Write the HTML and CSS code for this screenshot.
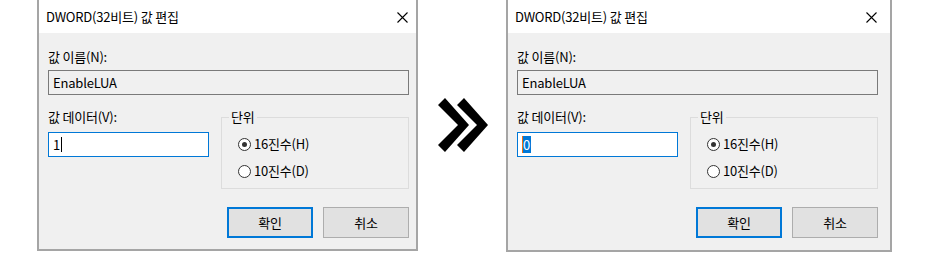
FILE: index.html
```html
<!DOCTYPE html>
<html>
<head>
  <title>DWORD 값 편집</title>
  <link rel="stylesheet" href="styles.css">
</head>
<body>
  <div class="page">
    <div class="dialog">
      <div class="titlebar">
        <span class="title">DWORD(32비트) 값 편집</span>
        <svg class="close" width="11" height="11" viewBox="0 0 11 11"><path d="M0.5 0.5 L10.5 10.5 M10.5 0.5 L0.5 10.5" stroke="#000" stroke-width="1.1"/></svg>
      </div>
      <div class="dlg-body">
        <div class="label">값 이름(N):</div>
        <div class="name-field">EnableLUA</div>
        <div class="row">
          <div class="data-col">
            <div class="label">값 데이터(V):</div>
            <div class="data-field">1<span class="caret"></span></div>
          </div>
          <fieldset class="group">
            <legend>단위</legend>
            <div class="radio"><span class="dot checked"></span>16진수(H)</div>
            <div class="radio"><span class="dot"></span>10진수(D)</div>
          </fieldset>
        </div>
        <div class="buttons">
          <div class="btn default">확인</div>
          <div class="btn">취소</div>
        </div>
      </div>
    </div>

    <div class="arrow">
      <svg width="88" height="255" viewBox="0 0 88 255">
        <polygon points="20,105 27,98 51,125 27,152 20,145 40,125" fill="#000"/>
        <polygon points="39,105 46,98 70,125 46,152 39,145 59,125" fill="#000"/>
      </svg>
    </div>

    <div class="dialog wide">
      <div class="titlebar">
        <span class="title">DWORD(32비트) 값 편집</span>
        <svg class="close" width="11" height="11" viewBox="0 0 11 11"><path d="M0.5 0.5 L10.5 10.5 M10.5 0.5 L0.5 10.5" stroke="#000" stroke-width="1.1"/></svg>
      </div>
      <div class="dlg-body">
        <div class="label">값 이름(N):</div>
        <div class="name-field">EnableLUA</div>
        <div class="row">
          <div class="data-col">
            <div class="label">값 데이터(V):</div>
            <div class="data-field"><span class="ime"></span><span class="selected">0</span></div>
          </div>
          <fieldset class="group">
            <legend>단위</legend>
            <div class="radio"><span class="dot checked"></span>16진수(H)</div>
            <div class="radio"><span class="dot"></span>10진수(D)</div>
          </fieldset>
        </div>
        <div class="buttons">
          <div class="btn default">확인</div>
          <div class="btn">취소</div>
        </div>
      </div>
    </div>
  </div>
</body>
</html>
```

FILE: styles.css
```css
/* two registry edit dialogs, before and after */
body {
  margin: 0;
  padding: 0;
  background-color: #fff;
  font-family: "Noto Sans CJK KR", sans-serif;
  font-size: 13px;
  letter-spacing: -0.2px;
  color: #000;
}

.page {
  display: flex;
  padding-left: 37px;
}

.dialog {
  width: 377px;
  height: 249px;
  border: 2px solid #a5a5a5;
  border-top: none;
  display: flex;
  flex-direction: column;
  background-color: #f0f0f0;
}

.dialog.wide {
  width: 382px;
  height: 250px;
}

.titlebar {
  height: 33px;
  background-color: #fff;
  display: flex;
  align-items: center;
  justify-content: space-between;
  padding: 0 8px 0 7px;
  flex-shrink: 0;
}

.dialog.wide .titlebar {
  padding-right: 13px;
}

.title {
  line-height: 16px;
}

.close {
  display: block;
  margin-top: 1px;
}

.dlg-body {
  padding: 16px 7px 0 9px;
  flex-grow: 1;
}

.dialog.wide .dlg-body {
  padding-right: 12px;
}

.label {
  line-height: 16px;
  height: 16px;
}

.name-field {
  margin-top: 5px;
  height: 23px;
  border: 1px solid #7a7a7a;
  background-color: #f0f0f0;
  line-height: 23px;
  padding-left: 4px;
}

.row {
  display: flex;
  margin-top: 14px;
  gap: 12px;
}

.data-col {
  width: 161px;
}

.data-field {
  margin-top: 7px;
  height: 23px;
  border: 1px solid #0078d7;
  background-color: #fff;
  line-height: 23px;
  padding-left: 4px;
  display: flex;
  align-items: center;
}

.caret {
  display: inline-block;
  width: 1px;
  height: 15px;
  background-color: #000;
  margin-left: 1px;
}

.ime {
  display: inline-block;
  width: 1px;
  height: 17px;
  background-color: #f07010;
}

.selected {
  background-color: #0078d7;
  color: #fff;
  line-height: 17px;
  padding-right: 1px;
}

.group {
  width: 188px;
  height: 80px;
  margin: 0;
  padding: 0 0 0 16px;
  border: 1px solid #dcdcdc;
  box-sizing: border-box;
}

.group legend {
  padding: 0 2px;
  margin-left: -9px;
  line-height: 16px;
}

.radio {
  display: flex;
  align-items: center;
  height: 16px;
  line-height: 16px;
  margin-top: 11px;
}

.radio + .radio {
  margin-top: 11px;
}

.dot {
  width: 11px;
  height: 11px;
  border: 1px solid #333;
  border-radius: 50%;
  background-color: #fff;
  margin-right: 3px;
  position: relative;
}

.dot.checked::after {
  content: "";
  position: absolute;
  left: 3px;
  top: 3px;
  width: 5px;
  height: 5px;
  border-radius: 50%;
  background-color: #333;
}

.buttons {
  display: flex;
  justify-content: flex-end;
  gap: 10px;
  margin-top: 18px;
}

.btn {
  width: 84px;
  height: 29px;
  border: 1px solid #adadad;
  background-color: #e1e1e1;
  display: flex;
  align-items: center;
  justify-content: center;
}

.btn.default {
  width: 82px;
  height: 27px;
  border: 2px solid #0078d7;
}

.arrow {
  width: 88px;
  flex-shrink: 0;
}

.arrow svg {
  display: block;
}
```
